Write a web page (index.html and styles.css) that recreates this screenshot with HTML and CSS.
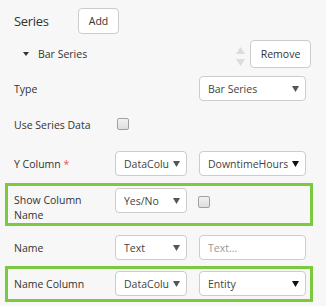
FILE: index.html
```html
<!DOCTYPE html>
<html>
<head>
<meta charset="utf-8">
<link rel="stylesheet" href="styles.css">
</head>
<body>
<div class="panel">
  <div class="header">
    <span class="title">Series</span>
    <button class="btn btn-add">Add</button>
  </div>
  <div class="series-item">
    <svg class="caret" width="6" height="4" viewBox="0 0 6 4"><path d="M0 0H6L3 4Z" fill="#333"/></svg>
    <span class="series-name">Bar Series</span>
    <span class="spacer"></span>
    <svg class="sort" width="9" height="20" viewBox="0 0 9 20"><path d="M0 7L4.5 0L9 7Z" fill="#dcdcdc"/><path d="M0 12H9L4.5 19Z" fill="#dcdcdc"/></svg>
    <button class="btn btn-remove">Remove</button>
  </div>
  <div class="rows">
    <div class="row">
      <div class="label">Type</div>
      <div class="select col-3"><span class="sel-text">Bar Series</span><svg class="arrow" width="7" height="6" viewBox="0 0 7 6"><path d="M0 0H7L3.5 6Z" fill="#555"/></svg></div>
    </div>
    <div class="row row--check">
      <div class="label">Use Series Data</div>
      <span class="checkbox cb-left"></span>
    </div>
    <div class="row">
      <div class="label">Y Column <span class="req">*</span></div>
      <div class="select"><span class="sel-text">DataColu</span><svg class="arrow" width="7" height="6" viewBox="0 0 7 6"><path d="M0 0H7L3.5 6Z" fill="#555"/></svg></div>
      <div class="select"><span class="sel-text">DowntimeHours</span><svg class="arrow" width="7" height="6" viewBox="0 0 7 6"><path d="M0 0H7L3.5 6Z" fill="#111"/></svg></div>
    </div>
    <div class="row row--hl row--first">
      <div class="label label--multi">Show Column Name</div>
      <div class="select"><span class="sel-text">Yes/No</span><svg class="arrow" width="7" height="6" viewBox="0 0 7 6"><path d="M0 0H7L3.5 6Z" fill="#555"/></svg></div>
      <span class="checkbox cb-right"></span>
    </div>
    <div class="row">
      <div class="label">Name</div>
      <div class="select"><span class="sel-text">Text</span><svg class="arrow" width="7" height="6" viewBox="0 0 7 6"><path d="M0 0H7L3.5 6Z" fill="#555"/></svg></div>
      <div class="select input"><span class="placeholder">Text...</span></div>
    </div>
    <div class="row row--hl">
      <div class="label">Name Column</div>
      <div class="select"><span class="sel-text">DataColu</span><svg class="arrow" width="7" height="6" viewBox="0 0 7 6"><path d="M0 0H7L3.5 6Z" fill="#555"/></svg></div>
      <div class="select"><span class="sel-text">Entity</span><svg class="arrow" width="7" height="6" viewBox="0 0 7 6"><path d="M0 0H7L3.5 6Z" fill="#111"/></svg></div>
    </div>
  </div>
</div>
</body>
</html>
```
FILE: styles.css
```css
* { box-sizing: border-box; }
body {
  margin: 0;
  background: #f7f7f7;
  font-family: "Open Sans", "Noto Sans", sans-serif;
  font-size: 10.5px;
  color: #333;
}
.panel { width: 326px; height: 306px; overflow: hidden; }
.header {
  display: flex;
  align-items: center;
  margin-top: 8px;
  padding-left: 14px;
  height: 26px;
}
.title {
  width: 64px;
  font-size: 13px;
  letter-spacing: -0.3px;
  color: #333;
}
.btn {
  font-family: inherit;
  font-size: 10.5px;
  color: #333;
  background: #fff;
  border: 1px solid #ccc;
  border-radius: 4px;
  padding: 0;
}
.btn-add { width: 41px; height: 26px; }
.series-item {
  display: flex;
  align-items: center;
  margin-top: 6px;
  height: 28px;
  padding-left: 23px;
  padding-right: 15px;
}
.caret { margin-right: 9px; margin-top: -1px; }
.spacer { flex: 1; }
.sort { margin-right: 5px; margin-top: 5px; }
.btn-remove { width: 61px; height: 28px; }
.rows { margin: 3px 13px 0 5px; }
.row {
  display: grid;
  grid-template-columns: 89px 72px 107px;
  column-gap: 12px;
  align-items: start;
  border: 3px solid transparent;
  padding: 2px 4px 0 6px;
}
.row--hl { border-color: #7cc940; }
.row--first { margin-top: 1px; margin-bottom: 4px; }
.row--check { padding-bottom: 10px; }
.label {
  padding-top: 6px;
  line-height: 15px;
  color: #333;
}
.label--multi { padding-top: 5px; }
.req { color: #f0564e; }
.select {
  display: flex;
  align-items: center;
  height: 25px;
  margin-bottom: 3px;
  background: #fff;
  border: 1px solid #ccc;
  border-radius: 4px;
  padding: 0 6px 0 8px;
  color: #444;
}
.col-3 { grid-column: 3; }
.sel-text {
  flex: 1;
  overflow: hidden;
  white-space: nowrap;
  min-width: 0;
}
.arrow { flex: none; margin-left: 4px; }
.placeholder { color: #999; }
.checkbox {
  display: block;
  width: 12px;
  height: 12px;
  border: 1px solid #a0a0a0;
  border-radius: 2px;
  background: linear-gradient(#f2f2f2, #dedede);
}
.cb-left { margin: 6px 0 0 2px; }
.cb-right { margin: 8px 0 0 -1px; }
```
